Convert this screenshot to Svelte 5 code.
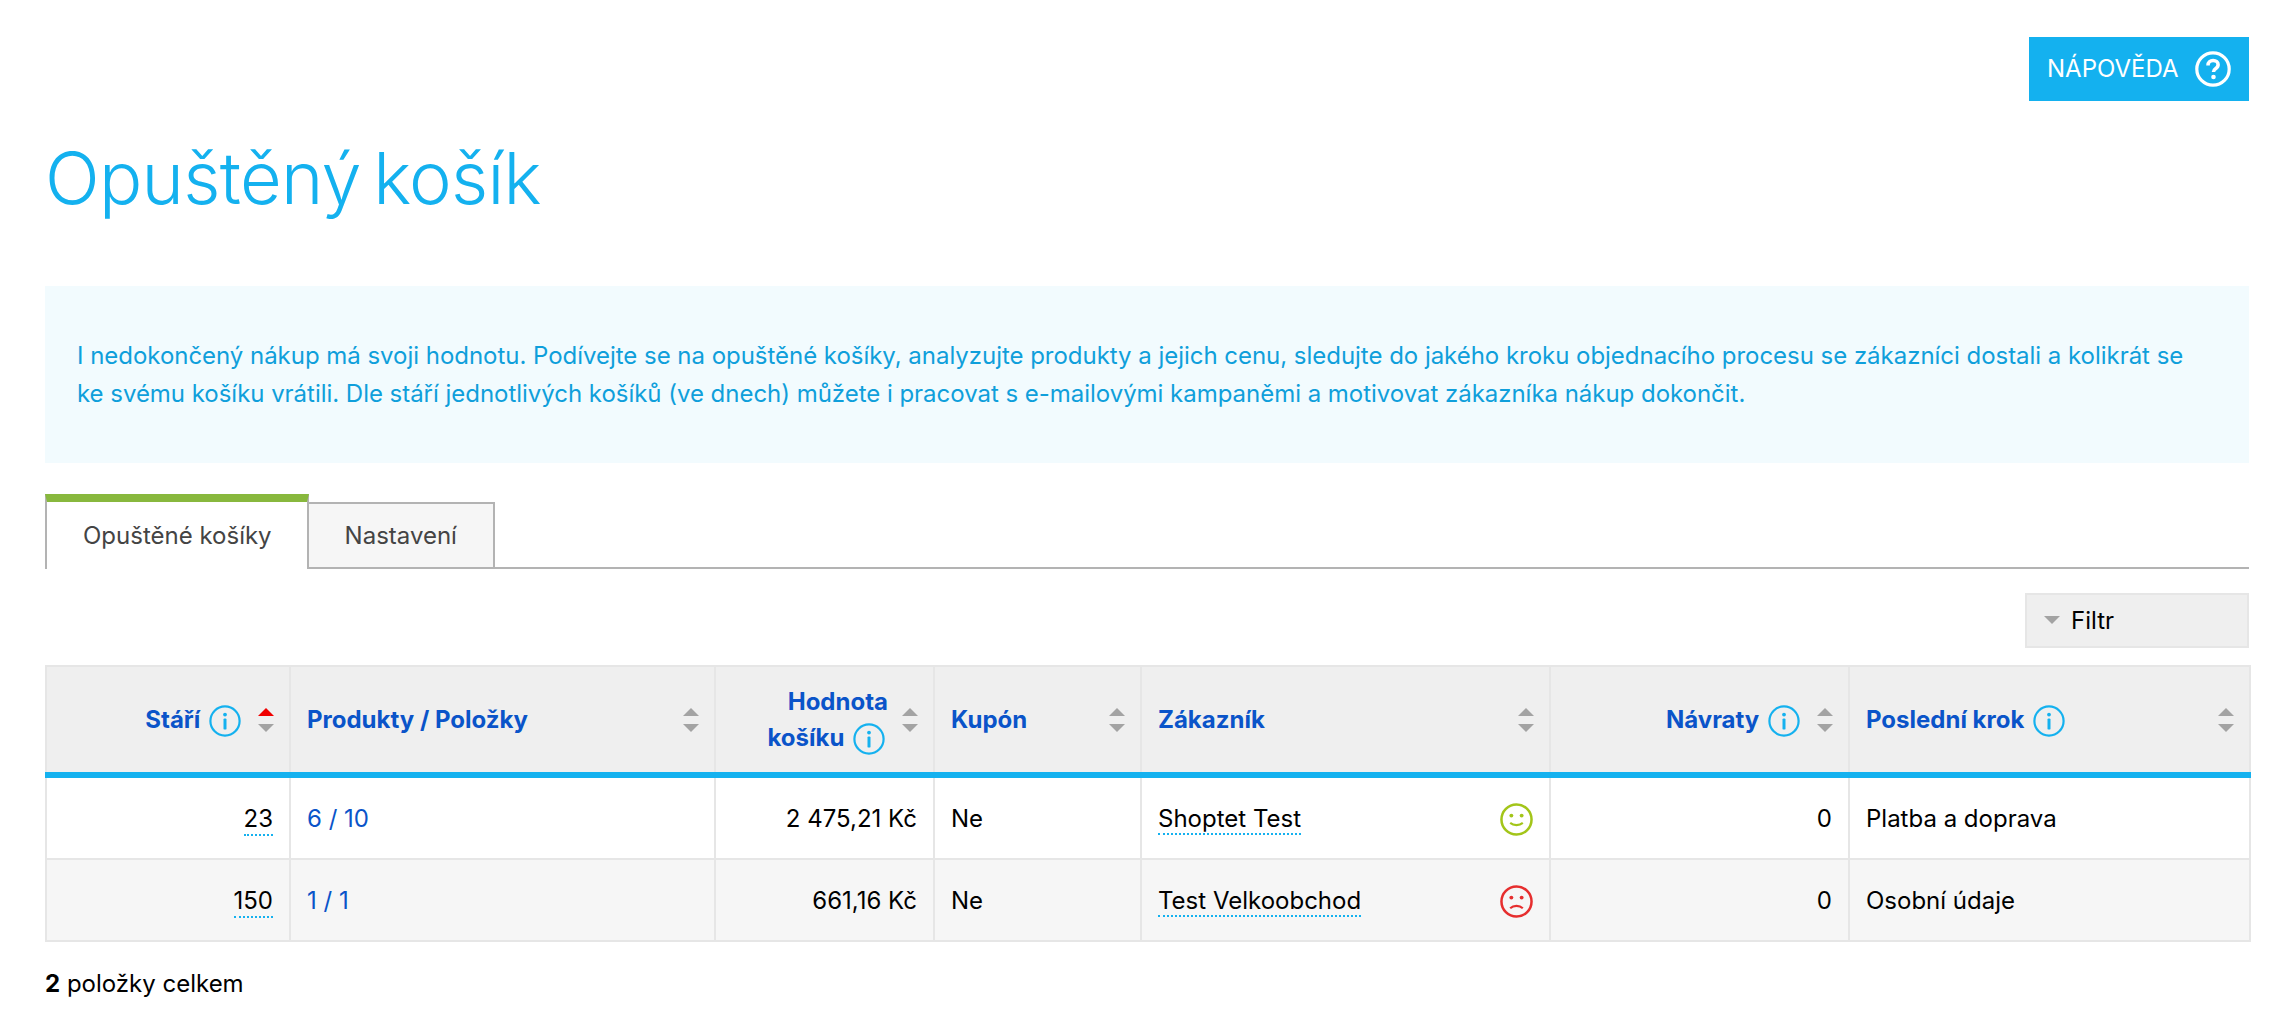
<script lang="ts">
	const columns = [
		{ label: 'Stáří', info: true, right: true, width: 244, sort: 'asc' },
		{ label: 'Produkty / Položky', width: 425 },
		{ label: 'Hodnota košíku', info: true, right: true, width: 219 },
		{ label: 'Kupón', width: 207 },
		{ label: 'Zákazník', width: 409 },
		{ label: 'Návraty', info: true, right: true, width: 299 },
		{ label: 'Poslední krok', info: true, width: 401 }
	];

	const rows = [
		{ age: 23, items: '6 / 10', value: '2 475,21 Kč', coupon: 'Ne', customer: 'Shoptet Test', happy: true, returns: 0, step: 'Platba a doprava' },
		{ age: 150, items: '1 / 1', value: '661,16 Kč', coupon: 'Ne', customer: 'Test Velkoobchod', happy: false, returns: 0, step: 'Osobní údaje' }
	];
</script>

{#snippet infoIcon()}
	<svg class="info" viewBox="0 0 32 32" aria-hidden="true">
		<circle cx="16" cy="16" r="14.6" fill="none" stroke="#14b1ef" stroke-width="2.2" />
		<circle cx="16" cy="9.6" r="1.9" fill="#14b1ef" />
		<rect x="14.5" y="13.4" width="3" height="11.2" rx="1.2" fill="#14b1ef" />
	</svg>
{/snippet}

{#snippet sortIcon(active)}
	<svg class="sort" viewBox="0 0 16 24" aria-hidden="true">
		<path d="M8 0 16 8H0Z" fill={active ? '#f00000' : '#a3a3a3'} />
		<path d="M0 16H16L8 24Z" fill="#a3a3a3" />
	</svg>
{/snippet}

<main class="page">
	<div class="top">
		<a class="help" href="#help">
			NÁPOVĚDA
			<svg viewBox="0 0 36 36" aria-hidden="true">
				<circle cx="18" cy="18" r="16.2" fill="none" stroke="#fff" stroke-width="3.2" />
				<path d="M13 14.4c0-3 2.2-4.9 5.1-4.9s5 1.7 5 4.2c0 2-1.1 3-2.6 4-1.3.9-2 1.6-2 3.2" fill="none" stroke="#fff" stroke-width="3.6" />
				<circle cx="18.5" cy="26" r="2.3" fill="#fff" />
			</svg>
		</a>
	</div>

	<h1>Opuštěný košík</h1>

	<div class="intro">
		<p>I nedokončený nákup má svoji hodnotu. Podívejte se na opuštěné košíky, analyzujte produkty a jejich cenu, sledujte do jakého kroku objednacího procesu se zákazníci dostali a kolikrát se ke svému košíku vrátili. Dle stáří jednotlivých košíků (ve dnech) můžete i pracovat s e-mailovými kampaněmi a motivovat zákazníka nákup dokončit.</p>
	</div>

	<nav class="tabs">
		<a class="tab active" href="#carts">Opuštěné košíky</a>
		<a class="tab" href="#settings">Nastavení</a>
	</nav>

	<div class="tools">
		<button class="filter" type="button"><span class="caret"></span>Filtr</button>
	</div>

	<table>
		<colgroup>
			{#each columns as col}
				<col style="width: {col.width}px" />
			{/each}
		</colgroup>
		<thead>
			<tr>
				{#each columns as col}
					<th>
						<div class="head" class:right={col.right}>
							<a class="title" href="#sort">
								{col.label}
								{#if col.info}{@render infoIcon()}{/if}
							</a>
							{@render sortIcon(col.sort === 'asc')}
						</div>
					</th>
				{/each}
			</tr>
		</thead>
		<tbody>
			{#each rows as row}
				<tr>
					<td class="num"><span class="dotted">{row.age}</span></td>
					<td><a class="link" href="#items">{row.items}</a></td>
					<td class="num">{row.value}</td>
					<td>{row.coupon}</td>
					<td>
						<div class="customer">
							<span class="dotted">{row.customer}</span>
							<svg class="face" viewBox="0 0 34 34" aria-hidden="true" style="color: {row.happy ? '#a3c519' : '#e62e2e'}">
								<circle cx="17" cy="17" r="15.5" fill="none" stroke="currentColor" stroke-width="2.6" />
								<circle cx="11.7" cy="13" r="2" fill="currentColor" />
								<circle cx="22.3" cy="13" r="2" fill="currentColor" />
								{#if row.happy}
									<path d="M10.5 20.5c3.5 3 9.5 3 13 0" fill="none" stroke="currentColor" stroke-width="2.2" />
								{:else}
									<path d="M10.5 24c3.5-3.4 9.5-3.4 13 0" fill="none" stroke="currentColor" stroke-width="2.2" />
								{/if}
							</svg>
						</div>
					</td>
					<td class="num">{row.returns}</td>
					<td>{row.step}</td>
				</tr>
			{/each}
		</tbody>
	</table>

	<p class="total"><strong>2</strong> položky celkem</p>
</main>

<style>
	:global(body) {
		margin: 0;
		background: #fff;
		color: #000;
		font-family: Inter, 'Noto Sans', sans-serif;
		font-size: 24px;
		line-height: 1.6;
	}
	.page {
		padding: 37px 42px 0 45px;
	}
	.top {
		display: flex;
		justify-content: flex-end;
	}
	.help {
		display: flex;
		align-items: center;
		justify-content: space-between;
		box-sizing: border-box;
		width: 220px;
		height: 64px;
		padding: 0 18px 0 18px;
		background: #14b1ef;
		color: #fff;
		font-size: 24px;
		text-decoration: none;
	}
	.help svg {
		width: 36px;
		height: 36px;
	}
	h1 {
		margin: 34px 0 0;
		color: #14b1ef;
		font-size: 72px;
		font-weight: 300;
		letter-spacing: -0.7px;
		word-spacing: -7px;
		line-height: 86px;
	}
	.intro {
		box-sizing: border-box;
		height: 177px;
		margin-top: 65px;
		padding: 51px 60px 0 32px;
		background: #f2fbfe;
		color: #0f9fdb;
		letter-spacing: -0.03px;
	}
	.intro p {
		margin: 0;
		line-height: 38px;
	}
	.tabs {
		display: flex;
		align-items: flex-end;
		height: 73px;
		margin-top: 31px;
		border-bottom: 2px solid #b3b3b3;
	}
	.tab {
		box-sizing: border-box;
		display: flex;
		align-items: center;
		height: 67px;
		margin-bottom: -2px;
		padding: 1px 36px 0;
		border: 2px solid #b3b3b3;
		background: #f6f6f6;
		color: #444;
		text-decoration: none;
	}
	.tab + .tab {
		margin-left: -2px;
	}
	.tab.active {
		position: relative;
		height: 75px;
		padding: 1px 35px 0 36px;
		border-top: 8px solid #88b83d;
		border-bottom: 0;
		background: #fff;
	}
	.tools {
		display: flex;
		justify-content: flex-end;
		margin-top: 24px;
	}
	.filter {
		display: flex;
		align-items: center;
		box-sizing: border-box;
		width: 224px;
		height: 55px;
		padding: 2px 17px 0;
		border: 2px solid #e6e6e6;
		background: #efefef;
		color: #000;
		font: inherit;
		text-align: left;
	}
	.caret {
		width: 0;
		height: 0;
		margin-right: 11px;
		margin-top: -3px;
		border-top: 8px solid #a3a3a3;
		border-left: 8px solid transparent;
		border-right: 8px solid transparent;
	}
	table {
		width: 100%;
		margin-top: 17px;
		border-collapse: collapse;
		table-layout: fixed;
	}
	th {
		height: 105px;
		padding: 0 15px 0 16px;
		border: 2px solid #e6e6e6;
		border-bottom: 6px solid #14b1ef;
		background: #efefef;
	}
	td {
		height: 78px;
		padding: 2px 16px 0;
		border: 2px solid #e6e6e6;
	}
	tbody tr:nth-child(even) td {
		background: #f6f6f6;
	}
	.head {
		display: flex;
		align-items: center;
		justify-content: space-between;
		gap: 14px;
	}
	.head.right {
		justify-content: flex-end;
		text-align: right;
	}
	.title {
		color: #0a54c9;
		font-weight: 700;
		line-height: 36px;
		text-decoration: none;
	}
	.info {
		width: 32px;
		height: 32px;
		margin: 0 3px;
		vertical-align: middle;
	}
	.sort {
		flex: none;
		width: 16px;
		height: 24px;
	}
	.num {
		text-align: right;
	}
	.link {
		color: #0a54c9;
		text-decoration: none;
	}
	.dotted {
		display: inline-block;
		margin-top: 2px;
		border-bottom: 2px dotted #14b1ef;
		line-height: 1.2;
	}
	.customer {
		display: flex;
		align-items: center;
		justify-content: space-between;
	}
	.face {
		width: 33px;
		height: 33px;
	}
	.total {
		margin: 23px 0 0;
	}
	strong {
		font-weight: 700;
	}
</style>
